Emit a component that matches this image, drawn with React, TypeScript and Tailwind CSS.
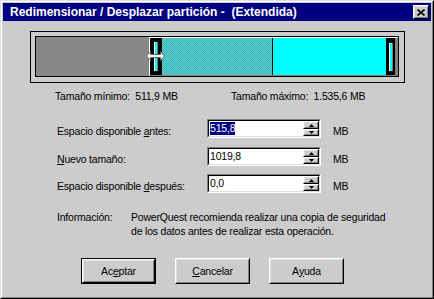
import React from "react";

const font = "font-['Liberation_Sans',Arial,sans-serif]";
const txt = "text-[10.5px] leading-[13px] tracking-[-0.2px]";

function Raised({ className = "", children }: { className?: string; children?: React.ReactNode }) {
  return (
    <div className={`border border-t-white border-l-white border-r-black border-b-black ${className}`}>
      <div className="flex h-full w-full items-center justify-center border border-t-[#dfdfdf] border-l-[#dfdfdf] border-r-[#808080] border-b-[#808080] bg-[#cccccc]">
        {children}
      </div>
    </div>
  );
}

function Tri({ down }: { down?: boolean }) {
  return (
    <svg width="5" height="3" viewBox="0 0 5 3">
      <polygon points={down ? "0,0 5,0 2.5,3" : "2.5,0 5,3 0,3"} fill="#000" />
    </svg>
  );
}

function SpinField({ value, selected }: { value: string; selected?: boolean }) {
  return (
    <div className="h-[19px] w-[114px] border border-t-[#808080] border-l-[#808080] border-r-white border-b-white">
      <div className="flex h-full w-full border border-t-black border-l-black border-r-[#dfdfdf] border-b-[#dfdfdf] bg-white">
        <div className={`flex flex-1 items-center pl-[1px] ${txt}`}>
          <span className={selected ? "bg-[#000080] text-white" : "text-black"}>{value}</span>
        </div>
        <div className="flex w-[16px] flex-col">
          <Raised className="h-[8px]">
            <Tri />
          </Raised>
          <Raised className="h-[7px]">
            <Tri down />
          </Raised>
        </div>
      </div>
    </div>
  );
}

function Row({ label, value, selected, top }: { label: React.ReactNode; value: string; selected?: boolean; top: string }) {
  return (
    <div className={`ml-[54px] flex items-end ${top}`}>
      <div className={`w-[150px] ${txt}`}>{label}</div>
      <SpinField value={value} selected={selected} />
      <div className={`ml-[12px] ${txt}`}>MB</div>
    </div>
  );
}

function Btn({ children, isDefault }: { children: React.ReactNode; isDefault?: boolean }) {
  const inner = (
    <div className="flex h-full w-full items-center justify-center border border-t-white border-l-white border-r-black border-b-black">
      <div className={`flex h-full w-full items-center justify-center border border-t-[#dfdfdf] border-l-[#dfdfdf] border-r-[#808080] border-b-[#808080] text-black ${txt}`}>
        {children}
      </div>
    </div>
  );
  return isDefault ? (
    <div className="h-[26px] w-[75px] border border-black">{inner}</div>
  ) : (
    <div className="h-[26px] w-[75px]">{inner}</div>
  );
}

const U = ({ children }: { children: React.ReactNode }) => (
  <span className="underline decoration-1 underline-offset-[1px]">{children}</span>
);

export default function App() {
  return (
    <div className={`h-[299px] w-[434px] border border-t-[#dfdfdf] border-l-[#dfdfdf] border-r-black border-b-black bg-[#cccccc] text-black ${font}`}>
      <div className="h-full w-full border border-t-white border-l-white border-r-[#808080] border-b-[#808080] p-[1px]">
        {/* title bar */}
        <div className="flex h-[18px] items-center bg-[#000080] pl-[7px] pr-[2px]">
          <div className="flex-1 whitespace-pre text-[12px] font-bold leading-[14px] text-white">
            Redimensionar / Desplazar partición -  (Extendida)
          </div>
          <Raised className="h-[14px] w-[16px]">
            <svg width="8" height="7" viewBox="0 0 8 7">
              <path d="M0.5 0.5 L7.5 6.5 M7.5 0.5 L0.5 6.5" stroke="#000" strokeWidth="1.6" />
            </svg>
          </Raised>
        </div>

        {/* partition map */}
        <div className="ml-[27px] mt-[10px] h-[52px] w-[375px] border border-black pl-[4px] pt-[4px]">
          <div className="flex h-[41px] w-[364px] border border-black">
            <div className="w-[113px] bg-[#888888]" />
            <div className="flex flex-1 border-l border-t border-b border-l-white border-t-white border-b-[#808080]">
              <div className="relative flex w-[12px] items-center justify-center bg-black">
                <div className="h-[29px] w-[4px] border-l border-l-white border-r border-r-[#808080] bg-[#00ffff]" />
                <svg className="absolute left-[-4px] top-[13px]" width="19" height="10" viewBox="0 0 19 10">
                  <polygon
                    points="0.5,5 4.5,0.5 4.5,3.5 14.5,3.5 14.5,0.5 18.5,5 14.5,9.5 14.5,6.5 4.5,6.5 4.5,9.5"
                    fill="#fff"
                    stroke="#606060"
                    strokeWidth="1"
                  />
                </svg>
              </div>
              <div className="w-[111px] border-r border-r-black bg-[repeating-conic-gradient(#00ffff_0_25%,#8c8c8c_0_50%)] bg-[length:2px_2px]" />
              <div className="flex-1 bg-[#00ffff]" />
              <div className="flex w-[9px] items-center justify-center bg-black">
                <div className="h-[28px] w-[4px] border-l border-l-white border-r border-r-[#808080] bg-[#00ffff]" />
              </div>
              <div className="w-[3px] bg-[#808080]" />
            </div>
          </div>
        </div>

        {/* min / max */}
        <div className={`mt-[7px] flex ${txt}`}>
          <div className="ml-[52px] w-[176px] whitespace-pre">Tamaño mínimo:  511,9 MB</div>
          <div className="whitespace-pre">Tamaño máximo:  1.535,6 MB</div>
        </div>

        <Row
          top="mt-[16px]"
          label={
            <>
              Espacio disponible <U>a</U>ntes:
            </>
          }
          value="515,8"
          selected
        />
        <Row
          top="mt-[9px]"
          label={
            <>
              <U>N</U>uevo tamaño:
            </>
          }
          value="1019,8"
        />
        <Row
          top="mt-[8px]"
          label={
            <>
              Espacio disponible <U>d</U>espués:
            </>
          }
          value="0,0"
        />

        {/* info */}
        <div className={`ml-[54px] mt-[17px] flex ${txt} leading-[14px]`}>
          <div className="w-[74px]">Información:</div>
          <div>
            PowerQuest recomienda realizar una copia de seguridad
            <br />
            de los datos antes de realizar esta operación.
          </div>
        </div>

        {/* buttons */}
        <div className="ml-[78px] mt-[20px] flex gap-[19px]">
          <Btn isDefault>
            Ac<U>e</U>ptar
          </Btn>
          <Btn>
            <U>C</U>ancelar
          </Btn>
          <Btn>
            A<U>y</U>uda
          </Btn>
        </div>
      </div>
    </div>
  );
}
